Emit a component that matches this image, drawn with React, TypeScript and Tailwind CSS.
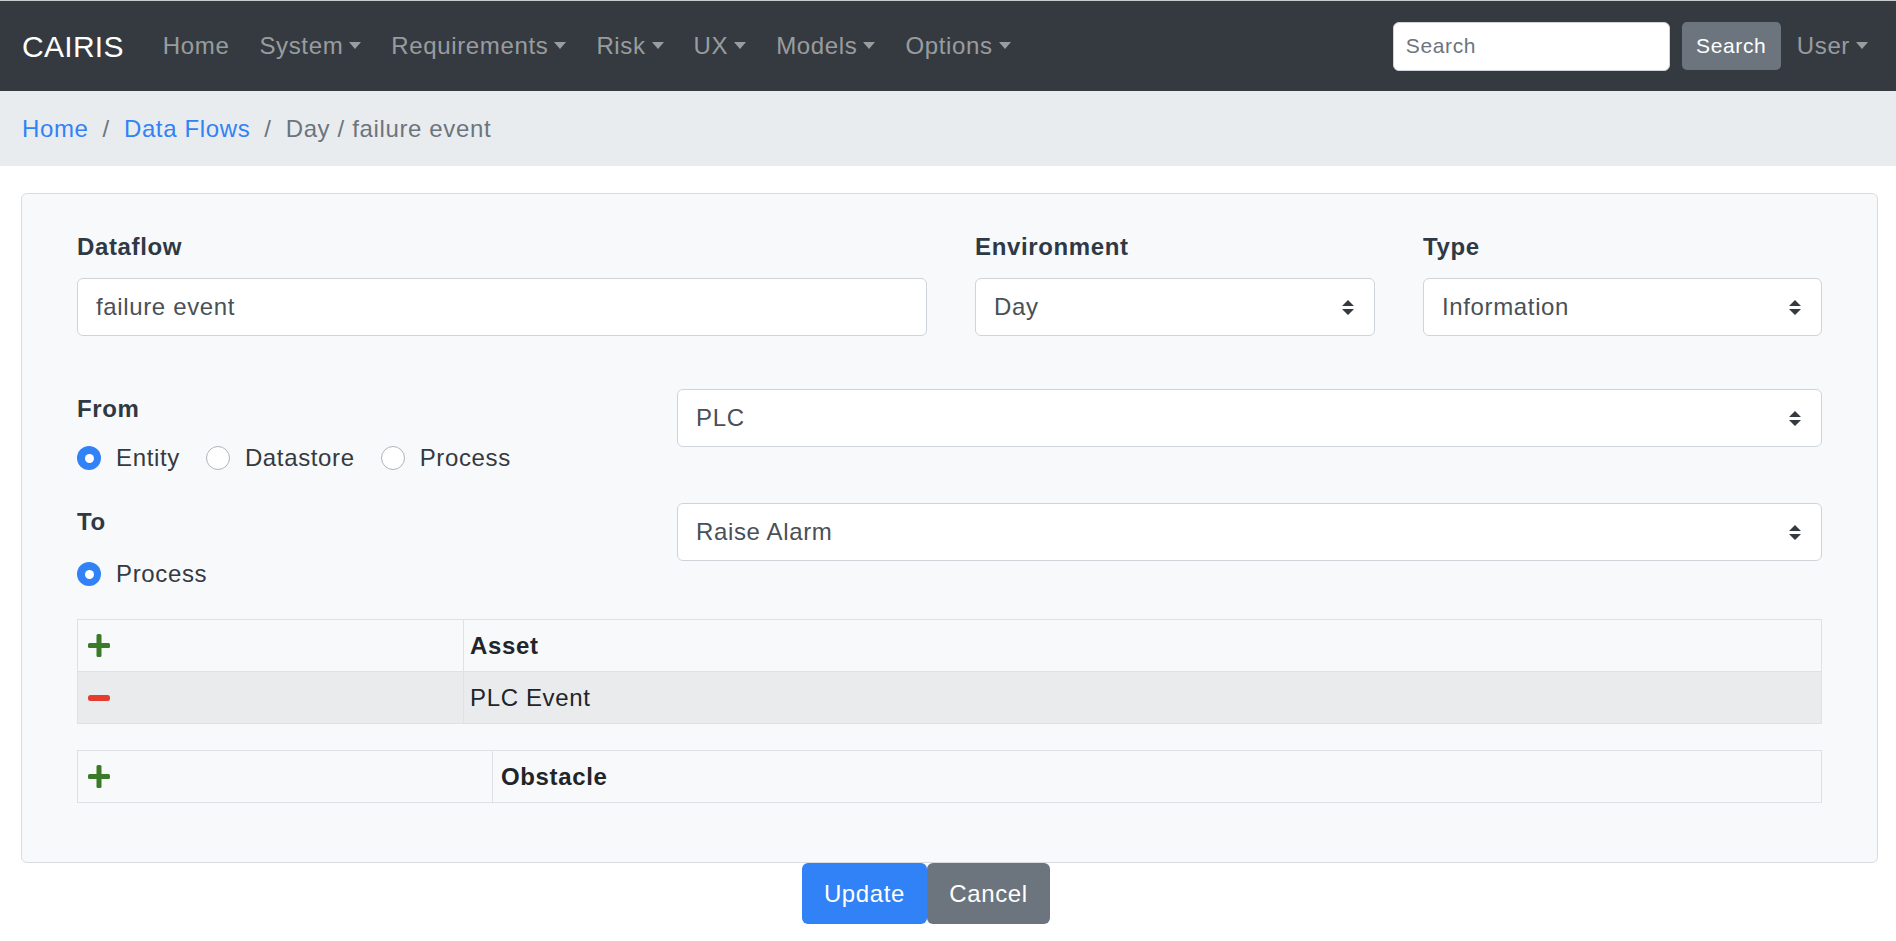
import React from "react";

const Caret = () => (
  <span className="ml-[6px] inline-block h-0 w-0 border-x-[6px] border-t-[7px] border-x-transparent border-t-current align-middle relative top-[-2px]" />
);

function Select({ value }: { value: string }) {
  return (
    <div className="flex h-[58px] w-full items-center justify-between rounded-[6px] border border-[#ced4da] bg-white pl-[18px] pr-[20px] text-[24px] text-[#495057]">
      <span>{value}</span>
      <svg width="12" height="15" viewBox="0 0 4 5">
        <path d="M2 0L0 2h4zm0 5L0 3h4z" fill="#343a40" />
      </svg>
    </div>
  );
}

function Radio({ checked, label, last }: { checked?: boolean; label: string; last?: boolean }) {
  return (
    <div className={`flex items-center ${last ? "" : "mr-[26px]"}`}>
      {checked ? (
        <span className="flex h-[24px] w-[24px] items-center justify-center rounded-full bg-[#3182f6]">
          <span className="h-[9px] w-[9px] rounded-full bg-white" />
        </span>
      ) : (
        <span className="h-[24px] w-[24px] rounded-full border border-[#adb5bd] bg-white" />
      )}
      <span className="ml-[15px] text-[24px] text-[#343a40]">{label}</span>
    </div>
  );
}

const Plus = () => (
  <svg width="22" height="23" viewBox="0 0 22 23">
    <rect x="8.5" y="0" width="5" height="23" rx="1.5" fill="#3b7a27" />
    <rect x="0" y="9" width="22" height="5" rx="1.5" fill="#3b7a27" />
  </svg>
);

const Minus = () => (
  <svg width="22" height="6" viewBox="0 0 22 6">
    <rect x="0" y="0" width="22" height="6" rx="2.5" fill="#e43d2f" />
  </svg>
);

export default function App() {
  const font = { fontFamily: '"Liberation Sans", Arial, Helvetica, sans-serif' };
  return (
    <div className="min-h-[941px] bg-white tracking-[0.04em]" style={font}>
      {/* Navbar */}
      <nav className="flex h-[91px] items-center border-t border-t-[#c9cbcd] bg-[#343a40] pl-[22px] pr-[28px]">
        <span className="mr-[24px] text-[30px] tracking-[0.01em] text-white">CAIRIS</span>
        <div className="flex items-center text-[24px] text-white/50">
          <span className="px-[15px]">Home</span>
          <span className="px-[15px]">System<Caret /></span>
          <span className="px-[15px]">Requirements<Caret /></span>
          <span className="px-[15px]">Risk<Caret /></span>
          <span className="px-[15px]">UX<Caret /></span>
          <span className="px-[15px]">Models<Caret /></span>
          <span className="px-[15px]">Options<Caret /></span>
        </div>
        <div className="ml-auto flex items-center">
          <div className="flex h-[49px] w-[277px] items-center rounded-[6px] border border-[#ced4da] bg-white pl-[12px] text-[21px] text-[#6c757d]">
            Search
          </div>
          <div className="ml-[12px] flex h-[48px] w-[99px] items-center justify-center rounded-[5px] bg-[#6c757d] text-[21px] text-white">
            Search
          </div>
          <span className="ml-[16px] text-[24px] text-white/50">User<Caret /></span>
        </div>
      </nav>

      {/* Breadcrumb */}
      <div className="flex h-[75px] items-center bg-[#e9ecef] px-[22px] text-[24px]">
        <span className="text-[#3182f6]">Home</span>
        <span className="px-[14px] text-[#6c757d]">/</span>
        <span className="text-[#3182f6]">Data Flows</span>
        <span className="px-[14px] text-[#6c757d]">/</span>
        <span className="text-[#6c757d]">Day / failure event</span>
      </div>

      {/* Card */}
      <div className="ml-[21px] mr-[18px] mt-[27px] rounded-[6px] border border-[#d9dbde] bg-[#f8f9fa] px-[55px] pb-[59px] pt-[35px]">
        <div className="grid grid-cols-[850px_400px_1fr] gap-x-[48px]">
          <div>
            <div className="h-[36px] text-[24px] font-bold leading-[36px] text-[#2f3946]">Dataflow</div>
            <div className="mt-[13px] flex h-[58px] items-center rounded-[6px] border border-[#ced4da] bg-white px-[18px] text-[24px] text-[#495057]">
              failure event
            </div>
          </div>
          <div>
            <div className="h-[36px] text-[24px] font-bold leading-[36px] text-[#2f3946]">Environment</div>
            <div className="mt-[13px]">
              <Select value="Day" />
            </div>
          </div>
          <div>
            <div className="h-[36px] text-[24px] font-bold leading-[36px] text-[#2f3946]">Type</div>
            <div className="mt-[13px]">
              <Select value="Information" />
            </div>
          </div>
        </div>

        <div className="mt-[53px] flex">
          <div className="w-[600px]">
            <div className="mt-[2px] h-[36px] text-[24px] font-bold leading-[36px] text-[#2f3946]">From</div>
            <div className="mt-[13px] flex h-[36px] items-center">
              <Radio checked label="Entity" />
              <Radio label="Datastore" />
              <Radio label="Process" last />
            </div>
          </div>
          <div className="flex-1">
            <Select value="PLC" />
          </div>
        </div>

        <div className="mt-[27px] flex">
          <div className="w-[600px]">
            <div className="mt-[1px] h-[36px] text-[24px] font-bold leading-[36px] text-[#2f3946]">To</div>
            <div className="mt-[16px] flex h-[36px] items-center">
              <Radio checked label="Process" last />
            </div>
          </div>
          <div className="flex-1">
            <Select value="Raise Alarm" />
          </div>
        </div>

        {/* Asset table */}
        <div className="mt-[27px] border border-[#dee2e6] text-[24px] text-[#212529]">
          <div className="flex h-[51px]">
            <div className="flex w-[386px] items-center border-r border-[#dee2e6] px-[10px]">
              <Plus />
            </div>
            <div className="flex flex-1 items-center px-[6px] font-bold">Asset</div>
          </div>
          <div className="flex h-[52px] border-t border-[#dee2e6] bg-[#eaebed]">
            <div className="flex w-[386px] items-center border-r border-[#dee2e6] px-[10px]">
              <Minus />
            </div>
            <div className="flex flex-1 items-center px-[6px]">PLC Event</div>
          </div>
        </div>

        {/* Obstacle table */}
        <div className="mt-[26px] border border-[#dee2e6] text-[24px] text-[#212529]">
          <div className="flex h-[51px]">
            <div className="flex w-[415px] items-center border-r border-[#dee2e6] px-[10px]">
              <Plus />
            </div>
            <div className="flex flex-1 items-center px-[8px] font-bold">Obstacle</div>
          </div>
        </div>
      </div>

      {/* Buttons */}
      <div className="flex justify-center pr-[44px]">
        <div className="flex h-[61px] w-[125px] items-center justify-center rounded-[6px] bg-[#3182f6] text-[24px] text-white">
          Update
        </div>
        <div className="flex h-[61px] w-[123px] items-center justify-center rounded-[6px] bg-[#6c757d] text-[24px] text-white">
          Cancel
        </div>
      </div>
    </div>
  );
}
